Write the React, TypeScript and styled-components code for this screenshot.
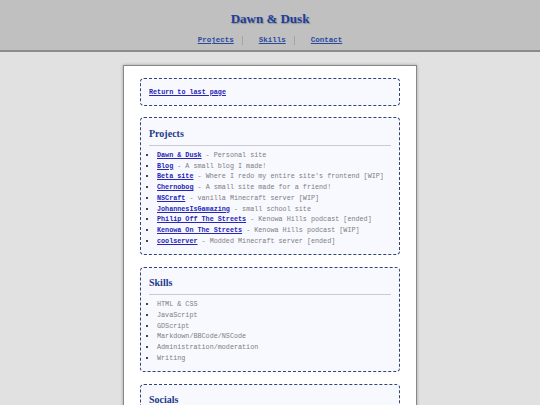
import styled, { createGlobalStyle } from "styled-components"

const Global = createGlobalStyle`
    html, body {
        margin: 0;
        padding: 0;
        background: #e1e1e1;
    }
    body {
        font-family: "Liberation Mono", "Courier New", monospace;
    }
`

const Cabecalho = styled.header`
    background-color: #c0c0c0;
    border-bottom: 2px solid #8c8c8c;
    height: 52px;
    box-sizing: border-box;
    padding-top: 11px;
    text-align: center;
`
const Titulo = styled.h1`
    margin: 0;
    font-family: "Liberation Serif", "Times New Roman", serif;
    font-size: 13px;
    line-height: 16px;
    font-weight: bold;
    color: #1d3f9c;
    text-shadow: 1px 1px 1px rgba(0, 0, 0, 0.25);
`
const Navegacao = styled.nav`
    display: flex;
    justify-content: center;
    align-items: center;
    margin-top: 8px;
    height: 10px;
`
const LinkNav = styled.a`
    font-family: "Liberation Mono", "Courier New", monospace;
    font-size: 7.5px;
    font-weight: bold;
    color: #2a4a9e;
    text-decoration: underline;
`
const Separador = styled.span`
    display: block;
    width: 1px;
    height: 9px;
    background: #a4a4a4;
    margin: 0 16px 0 8px;
`
const Painel = styled.main`
    width: 294px;
    box-sizing: border-box;
    margin: 13px auto 0;
    background: #ffffff;
    border: 1.5px solid #888888;
    box-shadow: 0 0 3px rgba(0, 0, 0, 0.3);
    padding: 12px 16px 20px 16px;
    display: flex;
    flex-direction: column;
    gap: 11.5px;
`
const Secao = styled.section`
    background: #f8f8ff;
    border: 1px dashed #2f4577;
    border-radius: 4px;
    padding: 7.5px 8px;
`
const TituloSecao = styled.h2`
    margin: 2px 0 0 0;
    font-family: "Liberation Serif", "Times New Roman", serif;
    font-size: 10px;
    line-height: 12px;
    font-weight: bold;
    color: #1d3a8a;
`
const Linha = styled.hr`
    border: none;
    height: 1px;
    background: #c9c9d2;
    margin: 5px 0 0 0;
`
const Lista = styled.ul`
    margin: 4px 0 0 0;
    padding-left: 8px;
    list-style: square;
    li {
        font-size: 6.75px;
        line-height: 10.75px;
        color: #7e7e7e;
    }
    li::marker {
        color: #444;
    }
`
const LinkItem = styled.a`
    font-weight: bold;
    color: #2626b8;
    text-decoration: underline;
`
const Texto = styled.p`
    margin: 0;
    font-size: 6.75px;
    line-height: 10.75px;
`

interface Projeto {
    nome: string
    descricao: string
}

const projetos: Projeto[] = [
    { nome: "Dawn & Dusk", descricao: "Personal site" },
    { nome: "Blog", descricao: "A small blog I made!" },
    { nome: "Beta site", descricao: "Where I redo my entire site's frontend [WIP]" },
    { nome: "Chernobog", descricao: "A small site made for a friend!" },
    { nome: "NSCraft", descricao: "vanilla Minecraft server [WIP]" },
    { nome: "JohannesIsGamazing", descricao: "small school site" },
    { nome: "Philip Off The Streets", descricao: "Kenowa Hills podcast [ended]" },
    { nome: "Kenowa On The Streets", descricao: "Kenowa Hills podcast [WIP]" },
    { nome: "coolserver", descricao: "Modded Minecraft server [ended]" },
]

const skills = [
    "HTML & CSS",
    "JavaScript",
    "GDScript",
    "Markdown/BBCode/NSCode",
    "Administration/moderation",
    "Writing",
]

const App = () => {
    return (
        <>
            <Global />
            <Cabecalho>
                <Titulo>Dawn &amp; Dusk</Titulo>
                <Navegacao>
                    <LinkNav href="#">Projects</LinkNav>
                    <Separador />
                    <LinkNav href="#">Skills</LinkNav>
                    <Separador />
                    <LinkNav href="#">Contact</LinkNav>
                </Navegacao>
            </Cabecalho>

            <Painel>
                <Secao>
                    <Texto>
                        <LinkItem href="#">Return to last page</LinkItem>
                    </Texto>
                </Secao>

                <Secao>
                    <TituloSecao>Projects</TituloSecao>
                    <Linha />
                    <Lista>
                        {projetos.map(item => (
                            <li key={item.nome}>
                                <LinkItem href="#">{item.nome}</LinkItem> - {item.descricao}
                            </li>
                        ))}
                    </Lista>
                </Secao>

                <Secao>
                    <TituloSecao>Skills</TituloSecao>
                    <Linha />
                    <Lista>
                        {skills.map(item => <li key={item}>{item}</li>)}
                    </Lista>
                </Secao>

                <Secao>
                    <TituloSecao>Socials</TituloSecao>
                    <Linha />
                    <Lista>
                        <li>Discord</li>
                        <li>GitHub</li>
                    </Lista>
                </Secao>
            </Painel>
        </>
    )
}

export default App
